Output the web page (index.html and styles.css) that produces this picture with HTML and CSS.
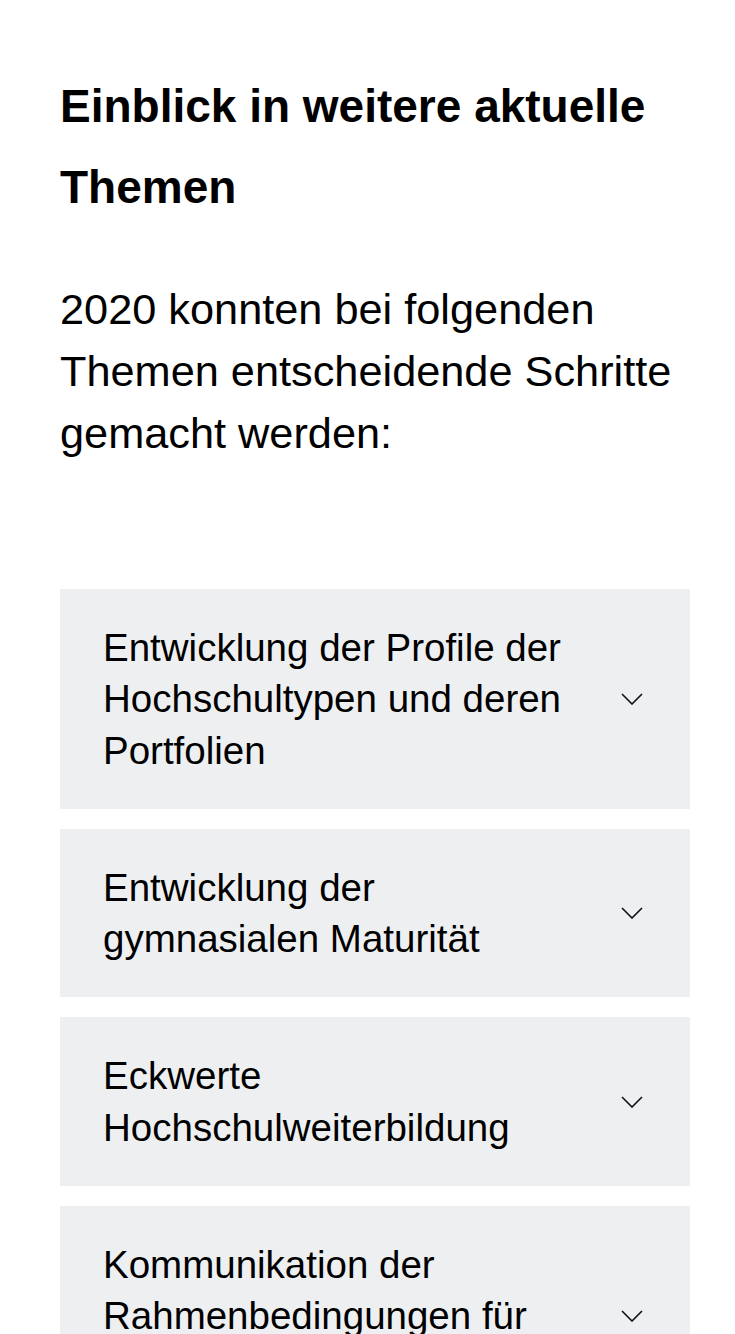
FILE: index.html
```html
<!DOCTYPE html>
<html lang="de">
<head>
    <meta charset="UTF-8">
    <meta name="viewport" content="width=device-width, initial-scale=1.0">
    <title>Einblick in weitere aktuelle Themen</title>
    <link rel="stylesheet" href="styles.css">
</head>
<body>
    <div class="page">
        <h2 class="topics-title">Einblick in weitere aktuelle Themen</h2>
        <p class="topics-intro">2020 konnten bei folgenden Themen entscheidende Schritte gemacht werden:</p>

        <div class="accordion">
            <div class="accordion-item">
                <span class="accordion-label">Entwicklung der Profile der Hochschultypen und deren Portfolien</span>
                <svg class="chevron" width="22" height="12" viewBox="0 0 22 12"><path d="M1 1l10 10L21 1" /></svg>
            </div>
            <div class="accordion-item">
                <span class="accordion-label">Entwicklung der gymnasialen Maturität</span>
                <svg class="chevron" width="22" height="12" viewBox="0 0 22 12"><path d="M1 1l10 10L21 1" /></svg>
            </div>
            <div class="accordion-item">
                <span class="accordion-label">Eckwerte Hochschulweiterbildung</span>
                <svg class="chevron" width="22" height="12" viewBox="0 0 22 12"><path d="M1 1l10 10L21 1" /></svg>
            </div>
            <div class="accordion-item">
                <span class="accordion-label">Kommunikation der Rahmenbedingungen für Hochschulen</span>
                <svg class="chevron" width="22" height="12" viewBox="0 0 22 12"><path d="M1 1l10 10L21 1" /></svg>
            </div>
        </div>
    </div>
</body>
</html>
```

FILE: styles.css
```css
body {
    margin: 0;
    padding: 0;
    background-color: #fff;
    color: #000;
    font-family: "Liberation Sans", Arial, sans-serif;
}

.page {
    padding: 66px 45px 0 60px;
}

.topics-title {
    margin: 0;
    font-size: 46px;
    line-height: 81px;
    font-weight: 700;
}

.topics-intro {
    margin: 50px 0 0;
    font-size: 43.3px;
    line-height: 62px;
}

.accordion {
    margin-top: 125px;
    display: flex;
    flex-direction: column;
    gap: 20px;
}

.accordion-item {
    display: flex;
    align-items: center;
    justify-content: space-between;
    padding: 33px 47px 33px 43px;
    background-color: #eeeff1;
}

.accordion-label {
    width: 470px;
    font-size: 38.5px;
    line-height: 51.3px;
}

.chevron {
    flex-shrink: 0;
}

.chevron path {
    fill: none;
    stroke: #111;
    stroke-width: 1.6;
}
```
